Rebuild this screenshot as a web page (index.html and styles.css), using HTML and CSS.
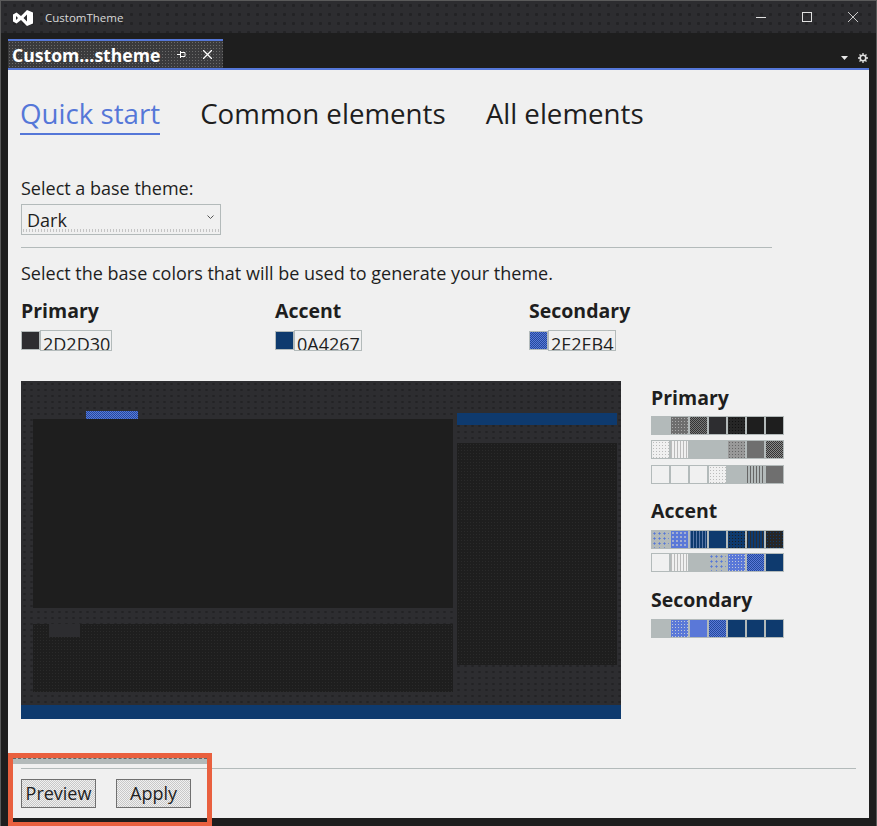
FILE: index.html
```html
<!DOCTYPE html>
<html>
<head>
  <title>CustomTheme</title>
  <link rel="stylesheet" href="styles.css">
</head>
<body>
  <div class="window">
    <header class="titlebar">
      <svg class="logo" viewBox="0 0 20 16" width="20" height="16">
        <path fill="#fff" fill-rule="evenodd" d="M14 0L20 2.5V13.5L14 16L8 10L3.5 13.5L0 11.5V4.5L3.5 2.5L8 6ZM14 4.5L10.5 8L14 11.5ZM3 6V10L5 8Z"/>
      </svg>
      <span class="titlebar-text">CustomTheme</span>
      <div class="window-buttons">
        <svg viewBox="0 0 10 10" width="10" height="10"><path d="M0 5.5H10" stroke="#e0e0e0" fill="none"/></svg>
        <svg viewBox="0 0 10 10" width="10" height="10"><rect x="0.5" y="0.5" width="9" height="9" stroke="#e0e0e0" fill="none"/></svg>
        <svg viewBox="0 0 10 10" width="10" height="10"><path d="M0 0L10 10M10 0L0 10" stroke="#c8c8c8" fill="none"/></svg>
      </div>
    </header>

    <div class="tabstrip">
      <div class="doc-tab">
        <span class="doc-tab-name">Custom...stheme</span>
        <svg class="pin" viewBox="0 0 9 9" width="9" height="9"><path d="M0 4.5H3M3.5 2.5H8V6.500H3.500ZM3.500 1V8" stroke="#fff" fill="none"/></svg>
        <svg class="tab-close" viewBox="0 0 9 9" width="9" height="9"><path d="M0 0L9 9M9 0L0 9" stroke="#fff" stroke-width="1.300" fill="none"/></svg>
      </div>
      <div class="strip-tools">
        <svg viewBox="0 0 7 4" width="7" height="4"><path d="M0 0H7L3.500 4Z" fill="#e8e8e8"/></svg>
        <svg viewBox="0 0 10 10" width="10" height="10">
          <circle cx="5" cy="5" r="2.800" stroke="#e0e0e0" stroke-width="1.600" fill="none"/>
          <path d="M5 0V2M5 8V10M0 5H2M8 5H10M1.500 1.500L2.800 2.800M7.200 7.200L8.500 8.500M8.500 1.500L7.200 2.800M2.800 7.200L1.500 8.500" stroke="#e0e0e0" stroke-width="1.300"/>
        </svg>
      </div>
    </div>

    <main class="content">
      <nav class="pivot">
        <a class="pivot-item active" href="#">Quick start</a>
        <a class="pivot-item" href="#">Common elements</a>
        <a class="pivot-item" href="#">All elements</a>
      </nav>

      <label class="field-label">Select a base theme:</label>
      <div class="combo">
        <span>Dark</span>
        <svg viewBox="0 0 7 4" width="7" height="4"><path d="M0.500 0.500L3.500 3.500L6.500 0.500" stroke="#555" fill="none"/></svg>
      </div>
      <div class="rule"></div>
      <p class="hint">Select the base colors that will be used to generate your theme.</p>

      <div class="base-colors">
        <div class="base-color">
          <h3>Primary</h3>
          <div class="picker"><span class="chip chip-primary"></span><span class="hex hex-primary">2D2D30</span></div>
        </div>
        <div class="base-color">
          <h3>Accent</h3>
          <div class="picker"><span class="chip chip-accent"></span><span class="hex">0A4267</span></div>
        </div>
        <div class="base-color">
          <h3>Secondary</h3>
          <div class="picker"><span class="chip chip-secondary"></span><span class="hex">2E2EB4</span></div>
        </div>
      </div>

      <div class="preview-row">
        <div class="preview">
          <div class="preview-main">
            <div class="preview-left">
              <div class="mini-tab"></div>
              <div class="mini-editor"></div>
              <div class="mini-output"><span class="mini-notch"></span></div>
            </div>
            <div class="preview-right">
              <div class="mini-title"></div>
              <div class="mini-side"></div>
            </div>
          </div>
          <div class="mini-status"></div>
        </div>

        <aside class="palette">
          <h3>Primary</h3>
          <div class="ramp">
            <i></i><i class="mid"></i><i class="char"></i><i class="slate"></i><i class="coal"></i><i class="ink"></i><i class="ink"></i>
          </div>
          <div class="ramp">
            <i class="speck"></i><i class="stripe"></i><i></i><i></i><i class="silver"></i><i class="flat"></i><i class="smoke"></i>
          </div>
          <div class="ramp ramp-wide">
            <i class="paper"></i><i class="paper"></i><i class="paper"></i><i class="speck"></i><i></i><i class="bars"></i><i class="flat"></i>
          </div>

          <h3 class="palette-accent">Accent</h3>
          <div class="ramp ramp-wide">
            <i class="blue-dots"></i><i class="peri-dots"></i><i class="steel"></i><i class="navy"></i><i class="navy-dots"></i><i class="navy-bars"></i><i class="coal-blue"></i>
          </div>
          <div class="ramp ramp-tight">
            <i class="paper"></i><i class="stripe"></i><i></i><i class="blue-dots"></i><i class="peri-light"></i><i class="blue-dark"></i><i class="navy"></i>
          </div>

          <h3 class="palette-secondary">Secondary</h3>
          <div class="ramp ramp-wide">
            <i></i><i class="peri-light"></i><i class="peri"></i><i class="blue-dark"></i><i class="navy"></i><i class="navy"></i><i class="navy"></i>
          </div>
        </aside>
      </div>

      <div class="rule rule-full"></div>
      <div class="actions">
        <button class="btn">Preview</button>
        <button class="btn">Apply</button>
      </div>
    </main>

    <div class="callout"><span class="callout-band"></span></div>
  </div>
</body>
</html>
```

FILE: styles.css
```css
* {
  box-sizing: border-box;
}

body {
  margin: 0;
  font-family: "Open Sans", "Noto Sans", sans-serif;
  color: #1e1e1e;
  background-color: #1e1e1e;
}

.window {
  position: relative;
  display: flex;
  flex-direction: column;
  width: 877px;
  height: 826px;
  overflow: hidden;
  border: 1px solid #5a5a5a;
  border-bottom: none;
  background-color: #1e1e1e;
}

/* title bar */
.titlebar {
  display: flex;
  align-items: center;
  flex: none;
  height: 32px;
  padding-left: 12px;
  background-color: #2d2d30;
  background-image: radial-gradient(#232325 20%, transparent 30%);
  background-size: 9px 9px;
}
.logo {
  margin-top: 1px;
}
.titlebar-text {
  margin-left: 12px;
  font-size: 11.500px;
  color: #d8d8d8;
}
.window-buttons {
  display: flex;
  align-items: center;
  gap: 36px;
  margin-left: auto;
  padding-right: 18px;
}

/* tab strip */
.tabstrip {
  display: flex;
  flex: none;
  height: 35px;
  padding: 6px 7px 0;
}
.doc-tab {
  display: flex;
  align-items: center;
  width: 215px;
  padding: 0 11px 0 4px;
  border-top: 2px solid #5577d8;
  background-color: #3a3a3c;
  background-image: radial-gradient(#6a6a6a 30%, transparent 40%);
  background-size: 3px 3px;
}
.doc-tab-name {
  font-size: 17.600px;
  font-weight: 700;
  color: #fff;
  white-space: nowrap;
}
.pin {
  margin-left: auto;
}
.tab-close {
  margin-left: 17px;
}
.strip-tools {
  display: flex;
  align-items: center;
  gap: 10px;
  margin-left: auto;
  padding: 9px 1px 0 0;
}

/* content */
.content {
  flex: none;
  width: 861px;
  height: 750px;
  margin-left: 7px;
  padding: 0 13px;
  border-top: 2px solid #5577d8;
  background-color: #f0f0f0;
}
.pivot {
  display: flex;
  gap: 40px;
  height: 65px;
  padding-top: 22px;
}
.pivot-item {
  height: 43px;
  font-size: 27.700px;
  line-height: 43px;
  color: #1e1e1e;
  text-decoration: none;
  white-space: nowrap;
}
.pivot-item.active {
  margin-left: -1px;
  border-bottom: 2px solid #5577d8;
  color: #5577d8;
}
.field-label {
  display: block;
  margin-top: 41px;
  font-size: 18px;
  line-height: 24px;
}
.combo {
  display: flex;
  align-items: center;
  justify-content: space-between;
  width: 200px;
  height: 31px;
  margin-top: 4px;
  padding: 0 6px 0 5px;
  border: 1px solid #b3baba;
  font-size: 18px;
  background-image: radial-gradient(#c4c4c4 30%, transparent 40%);
  background-repeat: repeat-x;
  background-position: left bottom 1px;
  background-size: 3px 5px;
}
.combo svg {
  margin-top: -6px;
}
.rule {
  width: 751px;
  height: 1px;
  margin-top: 12px;
  background-color: #b3baba;
}
.rule-full {
  width: 835px;
  margin-top: 49px;
}
.hint {
  margin: 13px 0 0;
  font-size: 18px;
  line-height: 24px;
}

.base-colors {
  display: flex;
  margin-top: 13px;
}
.base-color {
  width: 254px;
}
h3 {
  margin: 0;
  font-size: 19.500px;
  font-weight: 700;
  line-height: 26px;
}
.picker {
  display: flex;
  align-items: flex-start;
  height: 21px;
  margin-top: 6px;
}
.chip {
  width: 19px;
  height: 19px;
  margin-top: 1px;
  border: 1px solid #b3baba;
}
.chip-primary {
  background-color: #2d2d30;
}
.chip-accent {
  background-color: #0e3a6e;
}
.chip-secondary {
  background: repeating-conic-gradient(#234a9c 0 25%, #5a78d8 0 50%) 0 0 / 2px 2px;
}
.hex {
  width: 68px;
  height: 21px;
  overflow: hidden;
  padding-left: 2px;
  border: 1px solid #b3baba;
  font-size: 18px;
  line-height: 27px;
}
.hex-primary {
  width: 72px;
}

/* theme preview */
.preview-row {
  display: flex;
  gap: 30px;
  margin-top: 30px;
}
.preview {
  display: flex;
  flex-direction: column;
  flex: none;
  width: 600px;
  height: 338px;
  background-color: #2d2d30;
  background-image: radial-gradient(#232325 20%, transparent 30%);
  background-size: 7px 6px;
}
.preview-main {
  display: flex;
  flex: 1;
  gap: 4px;
  padding-left: 12px;
}
.preview-left {
  width: 420px;
  padding-top: 30px;
}
.mini-tab {
  width: 52px;
  height: 8px;
  margin-left: 53px;
  background: repeating-conic-gradient(#234a9c 0 25%, #5a78d8 0 50%) 0 0 / 2px 2px;
}
.mini-editor {
  height: 189px;
  background-color: #1e1e1e;
}
.mini-output {
  position: relative;
  height: 68px;
  margin-top: 16px;
  background-color: #1e1e1e;
  background-image: radial-gradient(#2a2a2a 30%, transparent 40%);
  background-size: 3px 3px;
}
.mini-notch {
  position: absolute;
  top: 0;
  left: 16px;
  width: 31px;
  height: 13px;
  background-color: #2d2d30;
}
.preview-right {
  width: 160px;
  padding-top: 32px;
}
.mini-title {
  height: 12px;
  background-color: #0e3a6e;
}
.mini-side {
  height: 222px;
  margin-top: 18px;
  background-color: #1e1e1e;
  background-image: radial-gradient(#2a2a2a 30%, transparent 40%);
  background-size: 3px 3px;
}
.mini-status {
  flex: none;
  height: 14px;
  background-color: #0e3a6e;
}

/* palette ramps */
.palette {
  width: 133px;
}
.palette h3 {
  margin-top: 4px;
}
.palette .palette-accent {
  margin-top: 14px;
}
.palette .palette-secondary {
  margin-top: 15px;
}
.ramp {
  display: flex;
  height: 19px;
  margin: 5px 0 0;
  padding: 1px 0 1px 1px;
  gap: 2px;
  background-color: #b3baba;
}
.ramp-wide {
  margin-top: 6px;
}
.ramp-tight {
  margin-top: 4px;
}
.ramp i {
  display: block;
  width: 17px;
  height: 17px;
  background-size: 3px 3px;
}
.ramp .mid { background-color: #6e6e6e; background-image: radial-gradient(#aaa 35%, transparent 45%); }
.ramp .char { background: repeating-conic-gradient(#333 0 25%, #777 0 50%) 0 0 / 2px 2px; }
.ramp .slate { background-color: #2d2d30; }
.ramp .coal { background-color: #262626; background-image: radial-gradient(#111 30%, transparent 40%); }
.ramp .ink { background-color: #1e1e1e; }
.ramp .speck { background-color: #f0f0f0; background-image: radial-gradient(#bbb 35%, transparent 45%); }
.ramp .stripe { background-color: #f0f0f0; background-image: repeating-linear-gradient(90deg, #bbb 0 1px, transparent 1px 3px); }
.ramp .silver { background-color: #999; background-image: radial-gradient(#666 35%, transparent 45%); }
.ramp .flat { background-color: #6f6f6f; }
.ramp .smoke { background: repeating-conic-gradient(#333 0 25%, #888 0 50%) 0 0 / 2px 2px; }
.ramp .paper { background-color: #f0f0f0; }
.ramp .bars { background-color: #b3baba; background-image: repeating-linear-gradient(90deg, #666 0 1px, transparent 1px 3px); }
.ramp .blue-dots { background-image: radial-gradient(#5577d8 25%, transparent 35%); background-size: 5px 5px; }
.ramp .peri-dots { background-color: #5a78d8; background-image: radial-gradient(#a3aed0 25%, transparent 35%); background-size: 4px 4px; }
.ramp .peri-light { background-color: #5a78d8; background-image: radial-gradient(#c0c8d8 35%, transparent 45%); }
.ramp .peri { background-color: #5a78d8; }
.ramp .steel { background-color: #0e3a6e; background-image: repeating-linear-gradient(90deg, #5a78a8 0 1px, transparent 1px 3px); }
.ramp .navy { background-color: #0e3a6e; }
.ramp .navy-dots { background-color: #0e3a6e; background-image: radial-gradient(#1e1e1e 35%, transparent 45%); }
.ramp .navy-bars { background-color: #0e3a6e; background-image: repeating-linear-gradient(90deg, #2d2d30 0 1px, transparent 1px 3px); }
.ramp .coal-blue { background-color: #262626; background-image: radial-gradient(#0e3a6e 35%, transparent 45%); }
.ramp .blue-dark { background: repeating-conic-gradient(#234a9c 0 25%, #5a78d8 0 50%) 0 0 / 2px 2px; }

/* footer buttons */
.actions {
  display: flex;
  gap: 20px;
  margin-top: 10px;
}
.btn {
  width: 75px;
  height: 29px;
  padding: 0;
  border: 1px solid #707070;
  font-family: inherit;
  font-size: 18px;
  line-height: 25px;
  color: #1e1e1e;
  background: repeating-conic-gradient(#c8c8c8 0 25%, #f0f0f0 0 50%) 0 0 / 2px 2px;
}

/* orange highlight drawn over the screenshot */
.callout {
  position: absolute;
  left: 7px;
  top: 752px;
  width: 204px;
  height: 74px;
  border: 5px solid #e9603f;
}
.callout-band {
  display: block;
  height: 6px;
  background-color: #b3baba;
  border-top: 1px dashed #666;
}
.callout::after {
  content: '';
  position: absolute;
  left: 0;
  right: 0;
  bottom: 0;
  height: 2px;
  background-color: #1e1e1e;
}
```
